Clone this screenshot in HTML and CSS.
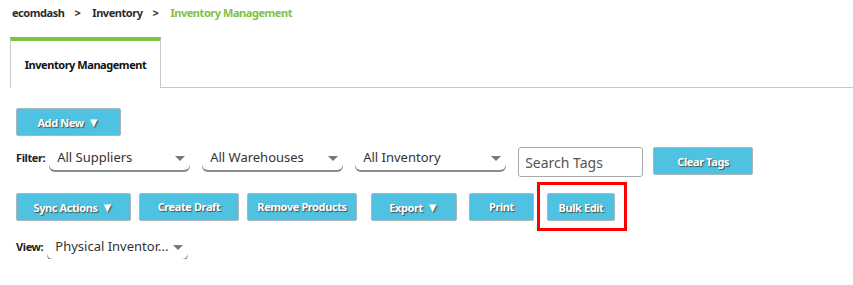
FILE: index.html
```html
<!DOCTYPE html>
<html lang="en">
<head>
  <meta charset="UTF-8" />
  <title>Inventory Management | ecomdash</title>
  <link rel="stylesheet" href="styles.css">
</head>
<body>
  <div class="breadcrumb">
    <a href="#">ecomdash</a>
    <span class="sep">&gt;</span>
    <a href="#">Inventory</a>
    <span class="sep">&gt;</span>
    <span class="current">Inventory Management</span>
  </div>

  <div class="tabs">
    <div class="tab active">Inventory Management</div>
    <div class="tab-rest"></div>
  </div>

  <div class="content">
    <div class="row">
      <button class="btn btn-add">Add New <span class="tri">&#9660;</span></button>
    </div>

    <div class="row filter-row">
      <span class="label">Filter:</span>
      <div class="select w-supp">All Suppliers<span class="caret"></span></div>
      <div class="select w-ware">All Warehouses<span class="caret"></span></div>
      <div class="select w-inv">All Inventory<span class="caret"></span></div>
      <input class="search" type="text" placeholder="Search Tags">
      <button class="btn btn-clear">Clear Tags</button>
    </div>

    <div class="row actions">
      <button class="btn btn-sync">Sync Actions <span class="tri">&#9660;</span></button>
      <button class="btn btn-draft">Create Draft</button>
      <button class="btn btn-remove">Remove Products</button>
      <button class="btn btn-export">Export <span class="tri">&#9660;</span></button>
      <button class="btn btn-print">Print</button>
      <div class="highlight">
        <button class="btn btn-bulk">Bulk Edit</button>
      </div>
    </div>

    <div class="row view-row">
      <span class="label">View:</span>
      <div class="select w-view">Physical Inventor...<span class="caret"></span></div>
    </div>
  </div>
</body>
</html>
```

FILE: styles.css
```css
* {
  margin: 0;
  padding: 0;
  box-sizing: border-box;
}

body {
  font-family: 'Noto Sans', 'Open Sans', sans-serif;
  background: #fff;
  color: #222;
  width: 853px;
}

.breadcrumb {
  display: flex;
  align-items: center;
  height: 24px;
  padding-left: 12px;
  font-size: 11px;
  font-weight: 700;
  letter-spacing: -0.45px;
}

.breadcrumb a {
  color: #2b2b2b;
  text-decoration: none;
}

.breadcrumb .sep {
  color: #2b2b2b;
  margin: 0 12px 0 10px;
}

.breadcrumb .current {
  color: #7dc242;
}

.tabs {
  display: flex;
  margin-top: 13px;
  padding-left: 10px;
}

.tab {
  width: 151px;
  height: 51px;
  border-top: 4px solid #7dc242;
  border-left: 1px solid #c8c8c8;
  border-right: 1px solid #c8c8c8;
  font-size: 11px;
  font-weight: 700;
  letter-spacing: -0.45px;
  color: #111;
  display: flex;
  align-items: center;
  justify-content: center;
  padding-bottom: 1px;
}

.tab-rest {
  flex: 1;
  border-bottom: 1px solid #c8c8c8;
}

.content {
  padding: 20px 0 0 16px;
}

.row {
  display: flex;
  align-items: center;
}

.btn {
  font-family: inherit;
  font-size: 11px;
  font-weight: 700;
  letter-spacing: -0.4px;
  color: #fff;
  text-shadow: 1px 1px 1px #4a4a4a;
  background: #4fc1e1;
  border: 1px solid #a9b7bd;
  border-radius: 2px;
  height: 28px;
  cursor: pointer;
}

.btn .tri {
  font-size: 13px;
  margin-left: 1px;
}

.btn-add { width: 105px; }

.filter-row {
  margin-top: 11px;
  height: 30px;
}

.label {
  font-size: 11px;
  font-weight: 700;
  letter-spacing: -0.4px;
  color: #222;
  align-self: flex-start;
  margin-top: 3px;
}

.select {
  position: relative;
  height: 22px;
  font-size: 13px;
  color: #333;
  padding-left: 8px;
  line-height: 18px;
  border-radius: 0 0 6px 6px;
  box-shadow: 0 2px 0 #8a8a8a;
  align-self: flex-start;
  margin-top: 1px;
}

.caret {
  position: absolute;
  right: 5px;
  top: 8px;
  border-left: 5px solid transparent;
  border-right: 5px solid transparent;
  border-top: 5px solid #777;
}

.w-supp { width: 141px; margin-left: 4px; }
.w-ware { width: 141px; margin-left: 12px; }
.w-inv { width: 151px; margin-left: 12px; }

.search {
  width: 125px;
  height: 30px;
  margin-left: 12px;
  border: 1px solid #aaa;
  border-radius: 3px;
  padding-left: 6px;
  font-family: inherit;
  font-size: 14px;
  color: #333;
}

.search::placeholder {
  color: #555;
}

.btn-clear {
  width: 100px;
  margin-left: 10px;
  margin-top: -2px;
}

.actions {
  margin-top: 5px;
}

.btn-sync { width: 115px; }
.btn-draft { width: 100px; margin-left: 8px; }
.btn-remove { width: 110px; margin-left: 8px; }
.btn-export { width: 86px; margin-left: 14px; }
.btn-print { width: 65px; margin-left: 12px; }

.highlight {
  margin-left: 3px;
  border: 3px solid #f00;
  padding: 8px 9px 7px 7px;
}

.btn-bulk { width: 68px; }

.view-row {
  margin-top: 5px;
}

.w-view { width: 141px; margin-left: 4px; }
```
